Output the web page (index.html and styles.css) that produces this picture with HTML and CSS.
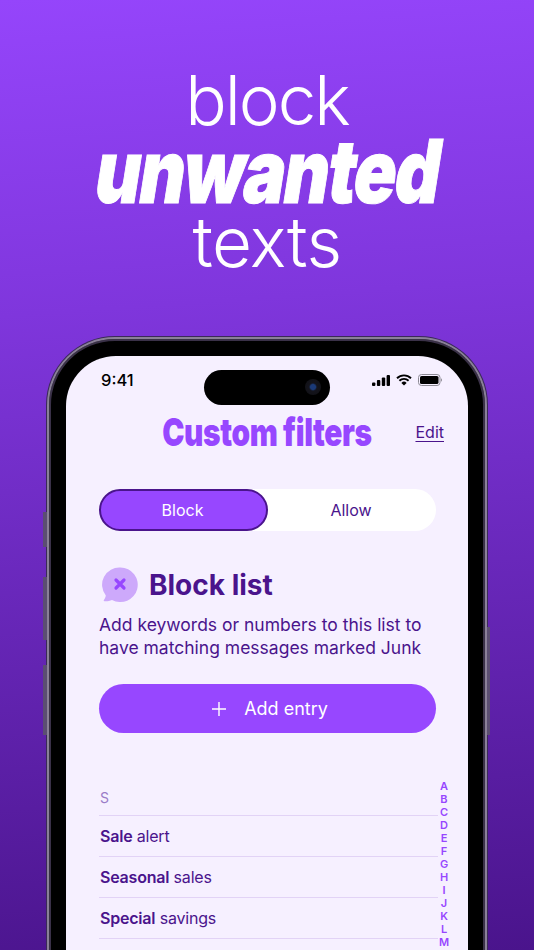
FILE: index.html
```html
<!DOCTYPE html>
<html lang="en">
<head>
<meta charset="utf-8">
<title>Custom filters</title>
<link rel="stylesheet" href="styles.css">
</head>
<body>
<main class="page">
  <h1 class="headline">
    <span class="line-light line-block">block</span>
    <span class="line-heavy"><span class="heavy-text">unwanted</span></span>
    <span class="line-light">texts</span>
  </h1>
  <div class="phone">
    <span class="btn btn-a"></span><span class="btn btn-b"></span><span class="btn btn-c"></span><span class="btn btn-r"></span>
    <div class="bezel">
      <div class="screen">
        <div class="island"><span class="camera"></span></div>
        <div class="status">
          <span class="time">9:41</span>
          <div class="status-icons">
            <svg class="ic-signal" viewBox="0 0 18 11" width="18" height="11"><rect x="0" y="7.5" width="3.4" height="3.5" rx="1"/><rect x="4.900" y="5" width="3.4" height="6" rx="1"/><rect x="9.800" y="2.500" width="3.4" height="8.500" rx="1"/><rect x="14.600" y="0" width="3.4" height="11" rx="1"/></svg>
            <svg class="ic-wifi" viewBox="0 0 16 12" width="16" height="12"><path d="M1 4.200a10 10 0 0 1 14 0M3.400 6.700a6.600 6.600 0 0 1 9.200 0" fill="none" stroke="#000" stroke-width="1.900"/><path d="M8 11.600 5.400 8.900a3.700 3.700 0 0 1 5.200 0z"/></svg>
            <svg class="ic-batt" viewBox="0 0 24 12" width="24" height="12"><rect x=".5" y=".5" width="21.500" height="11" rx="3" fill="none" stroke="#8d8a94"/><rect x="2" y="2" width="18.500" height="8" rx="1.600"/><path d="M23 4.300c.7.300 1 .9 1 1.700s-.3 1.400-1 1.700z" fill="#8d8a94"/></svg>
          </div>
        </div>
        <header class="titlebar">
          <span></span>
          <h2 class="title"><span class="title-text">Custom filters</span></h2>
          <a class="edit">Edit</a>
        </header>
        <div class="segment">
          <div class="seg seg-on">Block</div>
          <div class="seg">Allow</div>
        </div>
        <div class="listhead">
          <svg class="bubble" viewBox="0 0 36 36" width="36" height="36">
            <path d="M18.500 0.500a17.300 17.300 0 1 1-8.500 32.400c-2.300 1-5 1.500-7.500 1.300-.8-.1-1-.8-.6-1.300 1-1.300 1.700-2.800 1.900-4.400A17.300 17.300 0 0 1 18.500.5z" fill="#cda9fb"/>
            <path d="M14 13l8 8M22 13l-8 8" stroke="#9747ff" stroke-width="3.200" stroke-linecap="round"/>
          </svg>
          <h3 class="listtitle">Block list</h3>
        </div>
        <p class="desc">Add keywords or numbers to this list to have matching messages marked Junk</p>
        <button class="add">
          <svg viewBox="0 0 14 14" width="14" height="14"><path d="M7 0v14M0 7h14" stroke="#fff" stroke-width="1.400"/></svg>
          <span>Add entry</span>
        </button>
        <section class="list">
          <div class="letter">S</div>
          <div class="row"><b>Sale</b> alert</div>
          <div class="row"><b>Seasonal</b> sales</div>
          <div class="row"><b>Special</b> savings</div>
          <ol class="index">
            <li>A</li><li>B</li><li>C</li><li>D</li><li>E</li><li>F</li><li>G</li><li>H</li><li>I</li><li>J</li><li>K</li><li>L</li><li>M</li>
          </ol>
        </section>
      </div>
    </div>
  </div>
</main>
</body>
</html>
```

FILE: styles.css
```css
* { box-sizing: border-box; }
html, body { margin: 0; padding: 0; }
body { font-family: Inter, "Liberation Sans", sans-serif; }

.page {
  width: 534px;
  height: 950px;
  overflow: hidden;
  display: flex;
  flex-direction: column;
  align-items: center;
  background: linear-gradient(176deg, #9545fb 0%, #7f36dc 32%, #4a148c 100%);
}

.headline {
  margin: 65px 0 0;
  display: flex;
  flex-direction: column;
  align-items: center;
  color: #fff;
  font-weight: 400;
}
.line-light {
  font-size: 69px;
  font-weight: 300;
  line-height: 70px;
  letter-spacing: -0.5px;
}
.line-block { letter-spacing: -2px; }
.line-heavy { height: 72px; line-height: 72px; }
.heavy-text {
  display: inline-block;
  font-size: 88px;
  font-weight: 900;
  letter-spacing: -2px;
  -webkit-text-stroke: 1px #fff;
  transform: translateX(2px) skewX(-9deg) scaleX(0.8);
}

.phone {
  position: relative;
  width: 440px;
  height: 700px;
  margin-top: 60px;
  flex: none;
}
.btn {
  position: absolute;
  background: #5b4e72;
  width: 4px;
}
.btn-a { left: -4px; top: 175px; height: 35px; }
.btn-b { left: -4px; top: 240px; height: 63px; }
.btn-c { left: -4px; top: 328px; height: 70px; }
.btn-r { right: -3px; top: 290px; height: 108px; width: 3px; }

.bezel {
  height: 100%;
  padding: 17px 17px 0;
  background: #000;
  border: 2px solid #8a8098;
  border-bottom: 0;
  border-radius: 68px 68px 0 0;
  box-shadow: inset 0 0 0 2px #3a3148, 0 0 0 1px #3a2a58;
}
.screen {
  position: relative;
  height: 100%;
  background: #f6f0ff;
  border-radius: 50px 50px 0 0;
  padding: 14px 32px 0 33px;
  color: #4a148c;
}

.island {
  position: absolute;
  left: 138px;
  top: 14px;
  width: 126px;
  height: 35px;
  background: #000;
  border-radius: 18px;
}
.camera {
  position: absolute;
  right: 9px;
  top: 9px;
  width: 16px;
  height: 16px;
  border-radius: 50%;
  background: radial-gradient(circle, #1b3a78 0 2.500px, #14141c 4px, #101014 100%);
}

.status {
  display: flex;
  justify-content: space-between;
  align-items: center;
  height: 20px;
  padding: 0 0 0 2px;
  margin-right: -6px;
  color: #000;
}
.time { font-size: 16.500px; font-weight: 500; }
.status-icons { display: flex; align-items: center; gap: 6px; }
.status-icons svg { display: block; fill: #000; }

.titlebar {
  display: grid;
  grid-template-columns: 1fr auto 1fr;
  align-items: center;
  height: 44px;
  margin-top: 20px;
}
.title {
  margin: 0;
  color: #9747ff;
  font-size: 39px;
  font-weight: 900;
  line-height: 44px;
  width: 210px;
  display: flex;
  justify-content: center;
  white-space: nowrap;
}
.title-text { display: inline-block; transform: translateX(-1px) scaleX(0.765); letter-spacing: -0.5px; }
.edit {
  justify-self: end;
  margin-right: -8px;
  font-size: 16px;
  text-decoration: underline;
  text-underline-offset: 3px;
}

.segment {
  display: grid;
  grid-template-columns: 169px 1fr;
  height: 42px;
  margin-top: 35px;
  background: #fff;
  border-radius: 21px;
}
.seg {
  display: flex;
  align-items: center;
  justify-content: center;
  font-size: 16px;
  padding-right: 2px;
}
.seg-on {
  color: #fff;
  background: #9747ff;
  border: 2px solid #4a148c;
  border-radius: 21px;
}

.listhead {
  display: flex;
  align-items: center;
  gap: 11px;
  margin-top: 36px;
  padding-left: 3px;
  height: 36px;
}
.bubble { display: block; flex: none; }
.listtitle {
  margin: 0;
  font-size: 28px;
  font-weight: 700;
}
.desc {
  margin: 10px 0 0;
  font-size: 17.500px;
  line-height: 23px;
}
.add {
  display: flex;
  align-items: center;
  justify-content: center;
  gap: 18px;
  width: 100%;
  height: 49px;
  margin-top: 25px;
  padding: 0 0 0 5px;
  border: 0;
  border-radius: 25px;
  background: #9747ff;
  color: #fff;
  font: 400 18px Inter, sans-serif;
}

.list {
  position: relative;
  margin-top: 51px;
}
.letter {
  height: 32px;
  padding-left: 1px;
  line-height: 28px;
  font-size: 14px;
  color: #9a7cc8;
  border-bottom: 1px solid #e2d3f6;
  margin-right: -2px;
}
.row {
  height: 41px;
  padding-left: 1px;
  line-height: 40px;
  font-size: 16px;
  letter-spacing: -0.2px;
  border-bottom: 1px solid #e2d3f6;
  margin-right: -2px;
}
.row b { font-weight: 600; }

.index {
  position: absolute;
  top: -4px;
  right: -15px;
  width: 14px;
  margin: 0;
  padding: 0;
  list-style: none;
  color: #9747ff;
  font-size: 11px;
  font-weight: 600;
  line-height: 13px;
  text-align: center;
}
```
